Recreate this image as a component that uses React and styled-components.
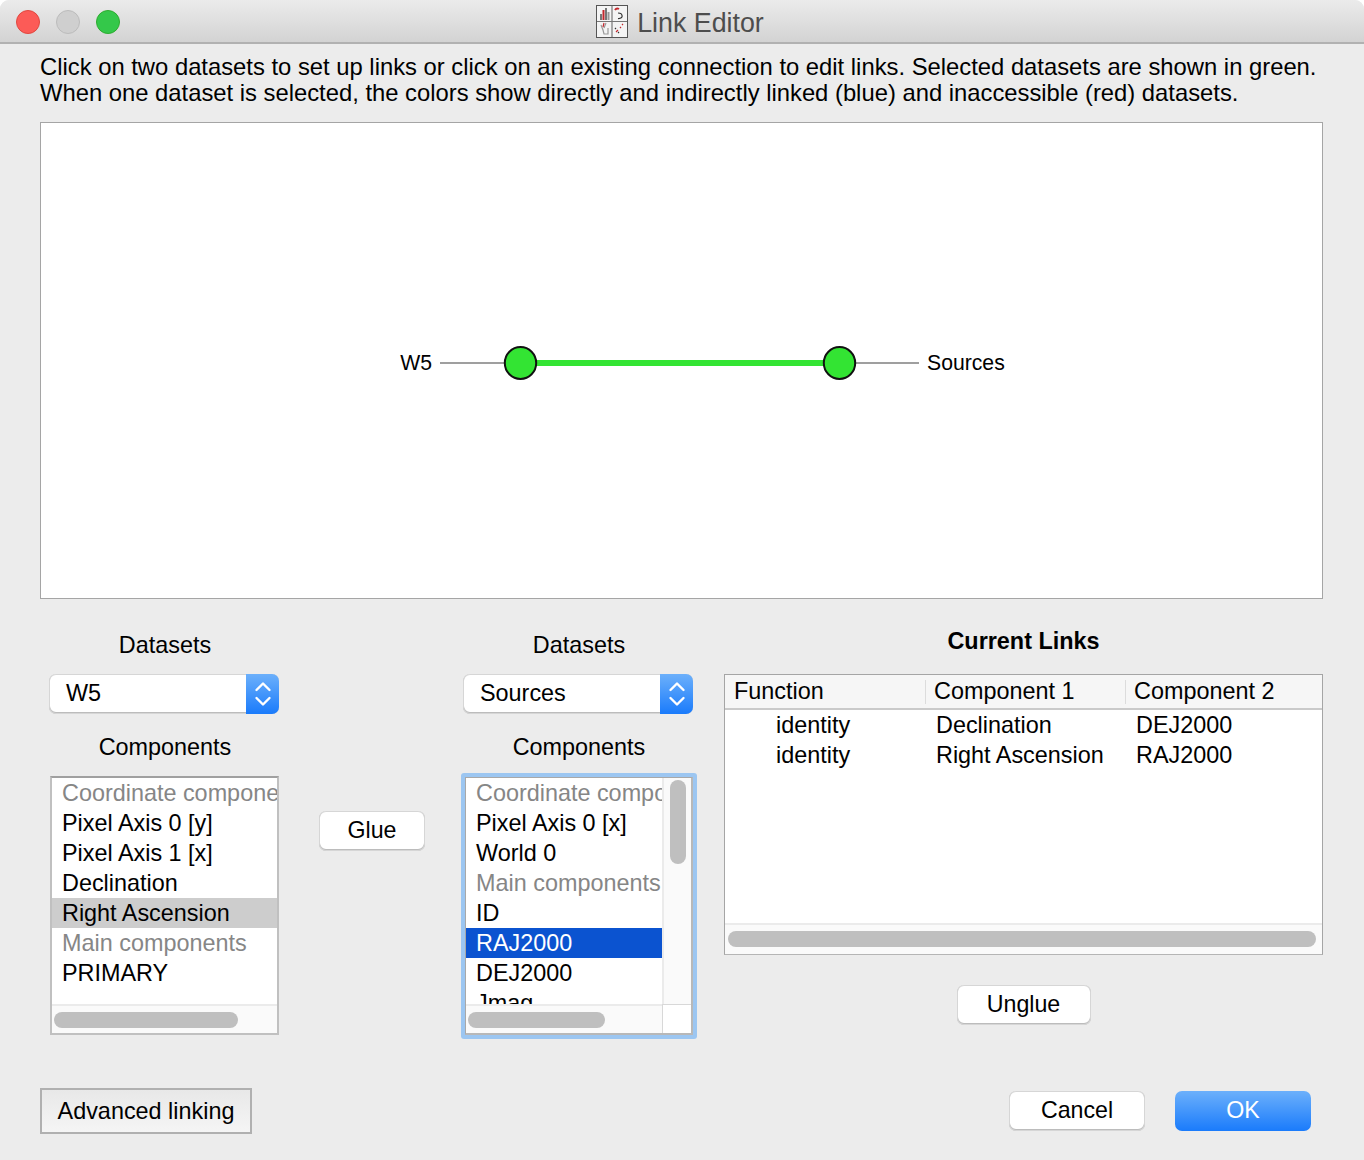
import React from "react";
import styled, { createGlobalStyle } from "styled-components";

const Global = createGlobalStyle`
  html, body { margin: 0; padding: 0; background: #fff; }
  body { font-family: "Liberation Sans", Arial, sans-serif; color: #000; }
  * { box-sizing: border-box; }
`;

const Window = styled.div`
  width: 1364px;
  height: 1160px;
  background: #ececec;
  border-radius: 9px 9px 0 0;
  overflow: hidden;
  display: flex;
  flex-direction: column;
`;
const TitleBar = styled.div`
  position: relative;
  height: 44px;
  flex: none;
  display: flex;
  align-items: center;
  justify-content: center;
  gap: 9px;
  padding-right: 4px;
  background: linear-gradient(#ebebeb, #d3d3d3);
  border-bottom: 2px solid #b1b1b1;
`;
const Lights = styled.div`
  position: absolute;
  left: 16px;
  top: 10px;
  display: flex;
  gap: 16px;
`;
const Light = styled.span`
  width: 24px;
  height: 24px;
  border-radius: 50%;
  background: ${p => p.$c};
  border: 1px solid ${p => p.$b};
`;
const TitleText = styled.span`
  font-size: 26.8px;
  line-height: 30px;
  padding-top: 4px;
  color: #4d4d4d;
`;
const Content = styled.div`
  flex: 1;
  padding: 10px 41px 26px 40px;
  display: flex;
  flex-direction: column;
`;
const Intro = styled.div`
  font-size: 23.8px;
  line-height: 26px;
  white-space: nowrap;
`;
const Canvas = styled.div`
  margin-top: 16px;
  height: 477px;
  background: #fff;
  border: 1px solid #a5a5a5;
  flex: none;
`;
const Diagram = styled.svg`
  display: block;
  width: 100%;
  height: 100%;
`;
const Lower = styled.div`
  margin-top: 30px;
  display: flex;
  flex: none;
  height: 420px;
`;
const Col = styled.div`
  width: 250px;
  flex: none;
  display: flex;
  flex-direction: column;
  align-items: center;
`;
const Label = styled.div`
  font-size: 23.4px;
  line-height: 32px;
  height: 32px;
  margin-top: ${p => p.$top || 0}px;
`;
const Select = styled.div`
  margin-top: 13px;
  width: 230px;
  height: 40px;
  margin-left: -2px;
  display: flex;
  align-items: center;
  background: #fff;
  border-radius: 7px;
  box-shadow: inset 0 0 0 1px #d6d6d6, inset 0 -1px 0 1px #bcbcbc;
  font-size: 23.4px;
  overflow: hidden;
`;
const SelectValue = styled.div`
  flex: 1;
  padding: 0 0 2px 17px;
`;
const Stepper = styled.div`
  width: 33px;
  height: 100%;
  background: linear-gradient(#6cb0fb, #1a7bfb);
  display: flex;
  align-items: center;
  justify-content: center;
`;
const Ring = styled.div`
  margin-top: ${p => p.$focus ? 10 : 13}px;
  padding: ${p => p.$focus ? 4 : 0}px;
  background: ${p => p.$focus ? "#9cc6f1" : "transparent"};
  border-radius: 3px;
  ${p => p.$focus ? "" : "margin-left: -1px;"}
`;
const List = styled.div`
  position: relative;
  width: ${p => p.$focus ? 228 : 229}px;
  height: ${p => p.$focus ? 258 : 259}px;
  background: #fff;
  border-style: solid;
  border-color: ${p => p.$focus ? "#a8a8a8 #b8b8b8 #b8b8b8 #a8a8a8" : "#a0a0a0 #c0c0c0 #c0c0c0 #c0c0c0"};
  border-width: ${p => p.$focus ? "1px 2px 2px 1px" : "2px"};
  overflow: hidden;
`;
const Rows = styled.div`
  height: 226px;
  width: ${p => p.$w}px;
  overflow: hidden;
`;
const Row = styled.div`
  height: 30px;
  line-height: 30px;
  padding-left: 10px;
  font-size: 23.4px;
  white-space: nowrap;
  overflow: hidden;
  color: ${p => p.$sel === "blue" ? "#fff" : p.$muted ? "#868686" : "#000"};
  background: ${p => p.$sel === "blue" ? "#0b53d0" : p.$sel === "grey" ? "#cdcdcd" : "transparent"};
`;
const HTrack = styled.div`
  position: absolute;
  left: 0;
  bottom: 0;
  width: ${p => p.$w ? p.$w + "px" : "100%"};
  height: ${p => p.$h || 29}px;
  background: #fafafa;
  border-top: 2px solid #ebebeb;
`;
const HThumb = styled.div`
  position: absolute;
  left: 2px;
  top: 6px;
  width: ${p => p.$w};
  height: 16px;
  background: #bfbfbf;
  border-radius: 8px;
`;
const VTrack = styled.div`
  position: absolute;
  right: 0;
  top: 0;
  width: 29px;
  height: 100%;
  background: #fafafa;
  border-left: 2px solid #ebebeb;
`;
const VThumb = styled.div`
  position: absolute;
  left: 6px;
  top: 2px;
  width: 16px;
  height: 84px;
  background: #bfbfbf;
  border-radius: 8px;
`;
const Corner = styled.div`
  position: absolute;
  left: -2px;
  bottom: 0;
  width: 29px;
  height: 29px;
  background: #fff;
  border-top: 1px solid #d8d8d8;
  border-left: 1px solid #d8d8d8;
`;
const GlueCol = styled.div`
  width: 164px;
  flex: none;
  display: flex;
  justify-content: center;
  padding-top: 182px;
`;
const Button = styled.button`
  width: ${p => p.$w}px;
  height: 40px;
  padding: 0 0 2px;
  border: none;
  border-radius: 7px;
  font: 23.2px "Liberation Sans", Arial, sans-serif;
  color: #000;
  background: #fff;
  box-shadow: inset 0 0 0 1px #d6d6d6, inset 0 -1px 0 1px #bcbcbc;
`;
const Primary = styled(Button)`
  color: #fff;
  background: linear-gradient(#6cb0fb, #1a7bfb);
  box-shadow: none;
`;
const RightCol = styled.div`
  margin-left: 20px;
  width: 599px;
  flex: none;
  display: flex;
  flex-direction: column;
  align-items: center;
`;
const Heading = styled.div`
  font-size: 23.4px;
  font-weight: bold;
  line-height: 26px;
  height: 26px;
  margin-top: -1px;
`;
const Table = styled.div`
  position: relative;
  margin-top: 20px;
  width: 599px;
  height: 281px;
  background: #fff;
  border: 1px solid #a5a5a5;
  border-bottom-color: #b5b5b5;
  overflow: hidden;
`;
const THead = styled.div`
  height: 35px;
  display: grid;
  grid-template-columns: 200px 200px 1fr;
  background: #f6f6f6;
  border-bottom: 2px solid #cacaca;
`;
const Th = styled.div`
  font-size: 23.4px;
  line-height: 32px;
  padding-left: 9px;
  position: relative;
  &::before {
    content: "";
    display: ${p => p.$first ? "none" : "block"};
    position: absolute;
    left: 0;
    top: 5px;
    height: 24px;
    width: 1px;
    background: #dcdcdc;
  }
`;
const Tr = styled.div`
  height: 30px;
  display: grid;
  grid-template-columns: 200px 200px 1fr;
  font-size: 23.4px;
  line-height: 30px;
`;
const Td = styled.div`
  padding-left: ${p => p.$first ? 51 : 11}px;
`;
const TableThumb = styled(HThumb)`
  left: 3px;
  width: 588px;
`;
const UnglueRow = styled.div`
  margin-top: 30px;
`;
const Footer = styled.div`
  flex: none;
  margin-top: auto;
  display: flex;
  align-items: center;
  padding-right: 12px;
  gap: 30px;
`;
const Advanced = styled.button`
  width: 212px;
  height: 46px;
  margin-right: auto;
  padding: 0;
  font: 23.4px "Liberation Sans", Arial, sans-serif;
  color: #000;
  background: linear-gradient(#e8e8e8, #f5f5f5);
  border: 2px solid #b0b0b0;
`;

const Chevrons = () => (
  <svg width="20" height="30" viewBox="0 0 20 30" fill="none" stroke="#fff" strokeWidth="2.4" strokeLinecap="round" strokeLinejoin="round">
    <path d="M3.5 11 L10 4.5 L16.5 11" />
    <path d="M3.5 19 L10 25.5 L16.5 19" />
  </svg>
);

const AppIcon = () => (
  <svg width="32" height="33" viewBox="0 0 32 33">
    <rect x="0.5" y="0.5" width="31" height="32" fill="#f4f4f4" stroke="#555" />
    <path d="M16 1V32M1 16.500H31" stroke="#777" strokeWidth="1.2" />
    <rect x="4" y="9" width="2" height="6" fill="#777" />
    <rect x="6.500" y="5" width="2" height="10" fill="#c4272c" />
    <rect x="9" y="3" width="2" height="12" fill="#777" />
    <rect x="11.500" y="7" width="2" height="8" fill="#999" />
    <path d="M19 5a3 3 0 0 1 4-1" stroke="#c4272c" strokeWidth="2" fill="none" />
    <path d="M22 8c5 0 6 6 0 5.500" stroke="#333" strokeWidth="1.2" fill="none" />
    <path d="M5 20l2 5 1 4h4v-6M10 18l-2 5" stroke="#999" strokeWidth="1.200" fill="none" />
    <path d="M8 18l-1 4" stroke="#c4272c" strokeWidth="1.200" />
    <path d="M20 27l2-2M24 23l1-1M26 20l1-1" stroke="#c4272c" strokeWidth="1.200" />
    <path d="M19 23l1 1M22 28l1-1" stroke="#333" strokeWidth="1.200" />
  </svg>
);

export default function App() {
  return (
    <>
      <Global />
      <Window>
        <TitleBar>
          <Lights>
            <Light $c="#fc5b57" $b="#e1473f" />
            <Light $c="#cfcfcf" $b="#bcbcbc" />
            <Light $c="#34c84a" $b="#2dac2f" />
          </Lights>
          <AppIcon />
          <TitleText>Link Editor</TitleText>
        </TitleBar>
        <Content>
          <Intro>
            Click on two datasets to set up links or click on an existing connection to edit links. Selected datasets are shown in green.<br />
            When one dataset is selected, the colors show directly and indirectly linked (blue) and inaccessible (red) datasets.
          </Intro>
          <Canvas>
            <Diagram viewBox="0 0 1281 475">
              <text x="391" y="246.500" textAnchor="end" fontSize="21.200" fontFamily="Liberation Sans, Arial, sans-serif">W5</text>
              <text x="886" y="246.500" fontSize="21.200" fontFamily="Liberation Sans, Arial, sans-serif">Sources</text>
              <path d="M399 240H463M814 240H878" stroke="#808080" strokeWidth="1.500" />
              <path d="M480 240H798" stroke="#33e433" strokeWidth="6" />
              <ellipse cx="479.500" cy="240" rx="15.700" ry="16" fill="#33e433" stroke="#111" strokeWidth="2" />
              <ellipse cx="798.500" cy="240" rx="15.700" ry="16" fill="#33e433" stroke="#111" strokeWidth="2" />
            </Diagram>
          </Canvas>
          <Lower>
            <Col>
              <Label>Datasets</Label>
              <Select>
                <SelectValue>W5</SelectValue>
                <Stepper><Chevrons /></Stepper>
              </Select>
              <Label $top={17}>Components</Label>
              <Ring>
                <List>
                  <Rows>
                    <Row $muted>Coordinate components</Row>
                    <Row>Pixel Axis 0 [y]</Row>
                    <Row>Pixel Axis 1 [x]</Row>
                    <Row>Declination</Row>
                    <Row $sel="grey">Right Ascension</Row>
                    <Row $muted>Main components</Row>
                    <Row>PRIMARY</Row>
                  </Rows>
                  <HTrack><HThumb $w="184px" /></HTrack>
                </List>
              </Ring>
            </Col>
            <GlueCol>
              <Button $w={106}>Glue</Button>
            </GlueCol>
            <Col>
              <Label>Datasets</Label>
              <Select>
                <SelectValue>Sources</SelectValue>
                <Stepper><Chevrons /></Stepper>
              </Select>
              <Label $top={17}>Components</Label>
              <Ring $focus>
                <List $focus>
                  <Rows $w={196}>
                    <Row $muted>Coordinate components</Row>
                    <Row>Pixel Axis 0 [x]</Row>
                    <Row>World 0</Row>
                    <Row $muted>Main components</Row>
                    <Row>ID</Row>
                    <Row $sel="blue">RAJ2000</Row>
                    <Row>DEJ2000</Row>
                    <Row>Jmag</Row>
                  </Rows>
                  <VTrack><VThumb /><Corner /></VTrack>
                  <HTrack $w={196}><HThumb $w="137px" /></HTrack>
                </List>
              </Ring>
            </Col>
            <RightCol>
              <Heading>Current Links</Heading>
              <Table>
                <THead>
                  <Th $first>Function</Th>
                  <Th>Component 1</Th>
                  <Th>Component 2</Th>
                </THead>
                <Tr><Td $first>identity</Td><Td>Declination</Td><Td>DEJ2000</Td></Tr>
                <Tr><Td $first>identity</Td><Td>Right Ascension</Td><Td>RAJ2000</Td></Tr>
                <HTrack $h={31}><TableThumb /></HTrack>
              </Table>
              <UnglueRow><Button $w={134}>Unglue</Button></UnglueRow>
            </RightCol>
          </Lower>
          <Footer>
            <Advanced>Advanced linking</Advanced>
            <Button $w={136}>Cancel</Button>
            <Primary $w={136}>OK</Primary>
          </Footer>
        </Content>
      </Window>
    </>
  );
}
